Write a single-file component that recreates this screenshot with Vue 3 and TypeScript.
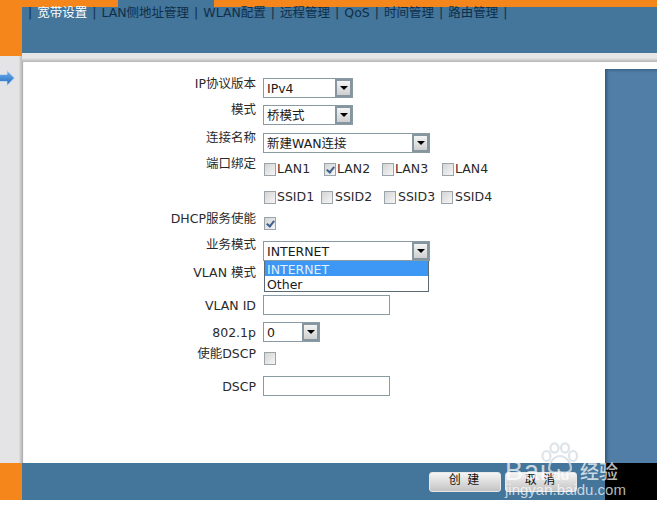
<script setup lang="ts">
const nav: string[] = ['宽带设置', 'LAN侧地址管理', 'WLAN配置', '远程管理', 'QoS', '时间管理', '路由管理']
const lans = [
  { name: 'LAN1', on: false },
  { name: 'LAN2', on: true },
  { name: 'LAN3', on: false },
  { name: 'LAN4', on: false },
]
const ssids = ['SSID1', 'SSID2', 'SSID3', 'SSID4']
</script>

<template>
  <div class="page">
    <div class="side">
      <div class="orange top"></div>
      <div class="gutter">
        <svg class="arrow" width="15" height="16" viewBox="0 0 15 16">
          <defs>
            <linearGradient id="arrowFill" x1="0" y1="0" x2="0" y2="1">
              <stop offset="0" stop-color="#6fb4ee" />
              <stop offset="1" stop-color="#2468c0" />
            </linearGradient>
          </defs>
          <path d="M-3 4.5H7V0.5L14.5 8L7 15.5V11.5H-3Z" fill="url(#arrowFill)" stroke="#cfe0f0" stroke-width=".8" />
        </svg>
      </div>
      <div class="orange bottom"></div>
    </div>
    <div class="column">
      <header class="header">
        <div class="strip"><i class="tab a"></i><i class="tab b"></i><i class="tab c"></i></div>
        <nav class="nav">
          <span class="sep">|</span>
          <template v-for="(item, i) in nav" :key="item">
            <span class="item" :class="{ active: i === 0 }">{{ item }}</span>
            <span class="sep">|</span>
          </template>
        </nav>
      </header>
      <div class="band"></div>
      <main class="main">
        <form class="form" @submit.prevent>
          <div class="row h27">
            <label class="l1">IP协议版本</label>
            <div class="select w90"><span>IPv4</span><b class="btn"><i></i></b></div>
          </div>
          <div class="row h28">
            <label>模式</label>
            <div class="select w90"><span>桥模式</span><b class="btn"><i></i></b></div>
          </div>
          <div class="row h27">
            <label>连接名称</label>
            <div class="select w167"><span>新建WAN连接</span><b class="btn"><i></i></b></div>
          </div>
          <div class="row h28">
            <label class="l2">端口绑定</label>
            <div class="checks lan">
              <span v-for="l in lans" :key="l.name" class="opt"><i class="box" :class="{ on: l.on }"></i>{{ l.name }}</span>
            </div>
          </div>
          <div class="row h28">
            <label></label>
            <div class="checks ssid">
              <span v-for="s in ssids" :key="s" class="opt"><i class="box"></i>{{ s }}</span>
            </div>
          </div>
          <div class="row h25">
            <label class="l3">DHCP服务使能</label>
            <div class="single"><i class="box on"></i></div>
          </div>
          <div class="row h27">
            <label class="l5">业务模式</label>
            <div class="select w167 open">
              <span>INTERNET</span><b class="btn"><i></i></b>
              <ul class="menu">
                <li class="sel">INTERNET</li>
                <li>Other</li>
              </ul>
            </div>
          </div>
          <div class="row h27">
            <label>VLAN 模式</label>
            <div></div>
          </div>
          <div class="row h27">
            <label class="mid">VLAN ID</label>
            <input class="text" type="text" />
          </div>
          <div class="row h27">
            <label class="mid">802.1p</label>
            <div class="select w57"><span>0</span><b class="btn"><i></i></b></div>
          </div>
          <div class="row h27">
            <label>使能DSCP</label>
            <div class="single low"><i class="box"></i></div>
          </div>
          <div class="row h27">
            <label class="mid">DSCP</label>
            <input class="text" type="text" />
          </div>
        </form>
        <aside class="aside"></aside>
      </main>
      <footer class="footer">
        <div class="actions">
          <button class="action" type="button">创 建</button>
          <button class="action" type="button">取 消</button>
        </div>
        <div class="black"></div>
      </footer>
    </div>
    <div class="mark">
      <svg class="paw" width="40" height="34" viewBox="0 0 40 34">
        <g fill="none" stroke="#d4dde4" stroke-opacity=".8" stroke-width="2.2">
          <ellipse cx="6.5" cy="14" rx="4" ry="5" />
          <ellipse cx="14.5" cy="6" rx="4" ry="4.6" />
          <ellipse cx="25" cy="6" rx="4" ry="4.6" />
          <ellipse cx="33" cy="14" rx="4" ry="5" />
          <path d="M20 14C14 14 9 21 9 26C9 31 15 31 20 30C25 31 31 31 31 26C31 21 26 14 20 14Z" />
        </g>
      </svg>
      <div class="brand"><span class="bai">Bai</span><span class="du">du</span></div>
      <div class="cn">经验</div>
      <div class="url">jingyan.baidu.com</div>
    </div>
  </div>
</template>

<style>
html, body { margin: 0; background: #fff; }
</style>

<style scoped>
.page {
  position: relative;
  width: 657px;
  height: 513px;
  display: flex;
  background: #fff;
  overflow: hidden;
  font-family: "DejaVu Sans", "Noto Sans CJK SC", sans-serif;
  font-size: 12.5px;
  color: #2a2a2a;
}
.side { width: 22px; height: 500px; display: flex; flex-direction: column; }
.orange { background: #f4861c; }
.top { height: 56px; }
.bottom { height: 37px; }
.gutter {
  flex: 1;
  background: linear-gradient(90deg, #e4e4e6 0, #e4e4e6 85%, #b8b8b8 100%);
  padding-top: 14px;
}
.arrow { display: block; }
.column { width: 635px; height: 500px; display: flex; flex-direction: column; }
.header { height: 53px; background: #44759a; }
.strip { height: 7px; display: flex; }
.tab { display: block; background: #f4861c; }
.tab.a { width: 96px; }
.tab.b { width: 96px; background: #44759a; }
.tab.c { flex: 1; }
.nav {
  display: flex;
  gap: 5px;
  padding-left: 6px;
  line-height: 12px;
  color: #0e2f4a;
  white-space: nowrap;
}
.item.active { color: #fff; }
.band {
  height: 9px;
  background: linear-gradient(#e6e6e6 0, #e6e6e6 55%, #b4b4b4 100%);
}
.main {
  height: 401px;
  display: flex;
  background: #fff;
  box-shadow: inset 2px 0 1px -1px #a8a8a8;
}
.form { width: 583px; padding-top: 16px; box-sizing: border-box; margin: 0; }
.aside {
  flex: 1;
  margin-top: 7px;
  background: #507ea6;
  box-shadow: inset 3px 2px 3px -1px #35597a;
}
.row { display: grid; grid-template-columns: 234px 1fr; column-gap: 7px; align-items: start; }
.h25 { height: 25px; }
.h27 { height: 27px; }
.h28 { height: 28px; }
label { text-align: right; line-height: 14px; margin-top: -2px; }
label.l1 { margin-top: -1px; }
label.l2 { margin-top: -3px; }
label.l3 { margin-top: -4px; }
label.l5 { margin-top: -3px; }
label.mid { margin-top: 4px; }
.select {
  position: relative;
  height: 20px;
  box-sizing: border-box;
  border: 1px solid #8a9aa3;
  background: #fff;
  line-height: 19px;
  padding-left: 3px;
  color: #1a1a1a;
}
.w90 { width: 90px; }
.w167 { width: 167px; }
.w57 { width: 57px; }
.btn {
  position: absolute;
  right: 0;
  top: 0;
  width: 17px;
  height: 18px;
  box-sizing: border-box;
  border: 2px solid #8696a0;
  background: linear-gradient(#f4f4f4, #cfcfcf);
}
.btn i {
  position: absolute;
  left: 3px;
  top: 5px;
  width: 0;
  height: 0;
  border: 4px solid transparent;
  border-top: 4px solid #000;
  border-bottom: 0;
}
.menu {
  position: absolute;
  left: 0;
  top: 19px;
  width: 165px;
  height: 31px;
  box-sizing: border-box;
  margin: 0;
  padding: 0;
  list-style: none;
  background: #fff;
  border: 1px solid #5c6a73;
  border-top: 0;
  z-index: 2;
}
.menu li { padding-left: 2px; height: 15px; line-height: 17px; }
.menu .sel { background: #3d97f5; color: #dff0ff; }
.checks { display: grid; padding-top: 2px; }
.lan { grid-template-columns: 60px 58px 60px auto; }
.ssid { grid-template-columns: 57px 63px 57px auto; }
.opt { display: flex; align-items: center; line-height: 14px; }
.ssid .box { margin-right: 2px; }
.ssid .opt:first-child .box { margin-right: 1px; }
.box {
  display: block;
  position: relative;
  width: 12px;
  height: 13px;
  margin: 0 1px;
  box-sizing: border-box;
  border: 1px solid #9aa4ab;
  background: linear-gradient(135deg, #d4d4d4, #f6f6f6);
}
.box.on::after {
  content: "";
  position: absolute;
  left: 3px;
  top: 1px;
  width: 3px;
  height: 6px;
  border: solid #3f5f8f;
  border-width: 0 2px 2px 0;
  transform: rotate(38deg);
}
.single { padding-top: 1px; }
.single.low { padding-top: 3px; }
.text {
  display: block;
  width: 127px;
  height: 20px;
  box-sizing: border-box;
  border: 1px solid #8a9aa3;
  background: #fff;
  padding: 0;
  margin: 0;
}
.footer { height: 37px; display: flex; background: #44759a; }
.actions {
  width: 583px;
  box-sizing: border-box;
  display: flex;
  justify-content: flex-end;
  gap: 4px;
  padding: 9px 28px 0 0;
}
.action {
  width: 72px;
  height: 20px;
  border: 1px solid #e8e8e8;
  border-radius: 3px;
  background: linear-gradient(#f4f4f4, #c4c4c4);
  padding: 0 0 9px;
  font: 12px/12px "Noto Sans CJK SC", sans-serif;
  letter-spacing: 2px;
  color: #111;
}
.black { flex: 1; background: #000; }
.mark {
  position: absolute;
  left: 505px;
  top: 441px;
  width: 118px;
  height: 58px;
  color: rgba(255, 255, 255, .72);
  pointer-events: none;
}
.paw { position: absolute; left: 35px; top: 1px; }
.brand {
  position: absolute;
  left: 0;
  top: 17px;
  line-height: 26px;
  font-family: "Liberation Sans", sans-serif;
  white-space: nowrap;
}
.bai { font-size: 27px; letter-spacing: 1px; }
.du { font-size: 14px; font-weight: 700; margin-left: 5px; }
.cn {
  position: absolute;
  left: 75px;
  top: 18px;
  font: 500 19px/24px "Noto Sans CJK SC", sans-serif;
  white-space: nowrap;
}
.url {
  position: absolute;
  left: 0;
  top: 41px;
  font: 15px/16px "Liberation Sans", sans-serif;
  white-space: nowrap;
}
</style>
